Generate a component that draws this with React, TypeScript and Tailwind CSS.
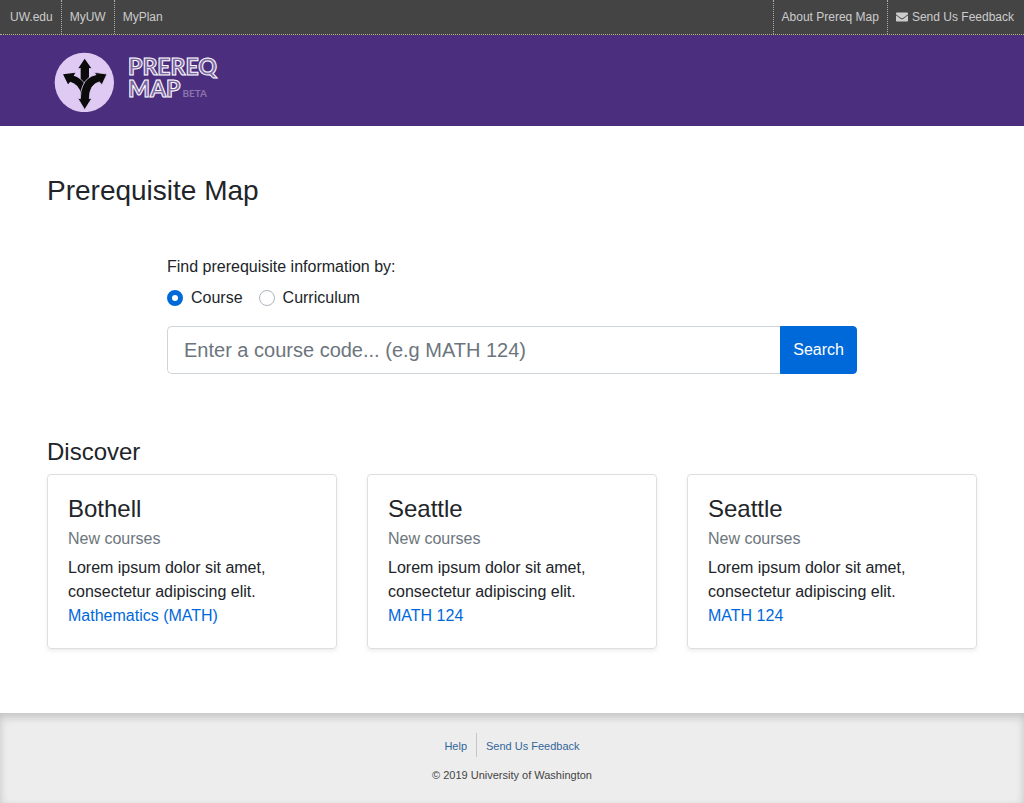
import { useState } from "react";
import { FaEnvelope } from "react-icons/fa";

const globalLinks = ["UW.edu", "MyUW", "MyPlan"];

const cards = [
  { campus: "Bothell", link: "Mathematics (MATH)" },
  { campus: "Seattle", link: "MATH 124" },
  { campus: "Seattle", link: "MATH 124" },
];

function ArrowsMark() {
  return (
    <svg viewBox="12 12 180 180" className="size-[60px]" aria-hidden="true">
      <circle cx="103" cy="103.5" r="89" fill="#dfcaf3" />
      <path
        d="M104 32 L124 61 L117 60 V90 Q108 98 104 106 Q99 98 92 92 V60 L85 61 Z"
        fill="#0b0b0b"
      />
      <path
        d="M39 79 L76 74 L71 83 Q92 89 105 109 Q98 122 94 138 Q86 108 61 101 L54 109 Z"
        fill="#0b0b0b"
      />
      <path
        d="M171 78 L132 73 L138 80 Q109 86 98 114 Q91 128 91 152 L83 150 L104 185 L126 150 L118 152 Q118 130 126 117 Q134 105 148 102 L156 110 Z"
        fill="#0b0b0b"
        stroke="#dfcaf3"
        strokeWidth="2.5"
      />
    </svg>
  );
}

function TopBar() {
  return (
    <nav
      aria-label="University"
      className="flex justify-between border-b border-dotted border-[#b5b58a] bg-[#444] px-[2px] text-xs leading-[34px] text-[#ccc]"
    >
      <ul className="flex">
        {globalLinks.map((label) => (
          <li
            key={label}
            className="border-r border-dotted border-[#aaa] px-2 last:border-r-0"
          >
            <a href="#">{label}</a>
          </li>
        ))}
      </ul>
      <ul className="flex">
        <li className="border-l border-dotted border-[#aaa] px-2">
          <a href="#">About Prereq Map</a>
        </li>
        <li className="border-l border-dotted border-[#aaa] px-2">
          <a href="#" className="flex items-center gap-1">
            <FaEnvelope className="size-3" aria-hidden="true" />
            Send Us Feedback
          </a>
        </li>
      </ul>
    </nav>
  );
}

function Header() {
  return (
    <header className="bg-[#4b2e7e] px-[54px] pt-[17px] pb-[14px]">
      <a href="#" className="flex w-fit gap-[14px]">
        <ArrowsMark />
        <span className="pt-[3px] font-['Lato',sans-serif] text-[23px] leading-[22px] font-black">
          <span className="block text-[#7d68a3] [-webkit-text-stroke:1px_#ffffff]">
            PREREQ
          </span>
          <span className="flex items-baseline gap-[2px]">
            <span className="text-[#7d68a3] [-webkit-text-stroke:1px_#ffffff]">
              MAP
            </span>
            <span className="text-[10px] font-bold text-[#8b74ad]">BETA</span>
          </span>
        </span>
      </a>
    </header>
  );
}

function SearchForm() {
  const [mode, setMode] = useState("course");
  const options = [
    { id: "course", label: "Course" },
    { id: "curriculum", label: "Curriculum" },
  ];
  return (
    <form
      className="mt-[47px] px-[120px]"
      onSubmit={(event) => event.preventDefault()}
    >
      <fieldset>
        <legend className="mb-[7px]">Find prerequisite information by:</legend>
        <div className="flex gap-4">
          {options.map(({ id, label }) => (
            <label key={id} htmlFor={id} className="flex items-center gap-2">
              <input
                id={id}
                type="radio"
                name="mode"
                checked={mode === id}
                onChange={() => setMode(id)}
                className="size-4 appearance-none rounded-full border border-[#adb5bd] bg-white checked:border-[5px] checked:border-[#0069d9]"
              />
              {label}
            </label>
          ))}
        </div>
      </fieldset>
      <div className="mt-4 flex h-12">
        <input
          type="text"
          aria-label="Course code"
          placeholder="Enter a course code... (e.g MATH 124)"
          className="min-w-0 flex-1 rounded-l-[5px] border border-r-0 border-[#ced4da] px-4 text-xl placeholder:text-[#6c757d]"
        />
        <button
          type="submit"
          className="rounded-r-[4px] border border-[#0069d9] bg-[#0069d9] px-3 text-white"
        >
          Search
        </button>
      </div>
    </form>
  );
}

function Discover() {
  return (
    <section className="mt-[63px]">
      <h2 className="text-2xl leading-[29px]">Discover</h2>
      <div className="mt-2 grid grid-cols-3 gap-[30px]">
        {cards.map(({ campus, link }, index) => (
          <article
            key={index}
            className="rounded-[4px] border border-[#dfdfdf] p-5 shadow-[0_2px_4px_rgba(0,0,0,0.075)]"
          >
            <h3 className="text-2xl leading-[27px]">{campus}</h3>
            <h4 className="mt-[7px] mb-2 leading-[19px] text-[#6c757d]">
              New courses
            </h4>
            <p>Lorem ipsum dolor sit amet, consectetur adipiscing elit.</p>
            <a href="#" className="block text-[#0069d9]">
              {link}
            </a>
          </article>
        ))}
      </div>
    </section>
  );
}

function Footer() {
  return (
    <footer className="mt-16 bg-[#ededed] pt-5 pb-[15px] text-center text-[11px] leading-[26px] text-[#444] shadow-[inset_0_4px_8px_rgba(0,0,0,0.18)]">
      <ul className="flex h-6 justify-center text-[#336699]">
        <li className="border-r border-[#c4c4c4] pr-[9px]">
          <a href="#">Help</a>
        </li>
        <li className="pl-[9px]">
          <a href="#">Send Us Feedback</a>
        </li>
      </ul>
      <p className="mt-[5px]">© 2019 University of Washington</p>
    </footer>
  );
}

export default function App() {
  return (
    <div className="bg-white font-['Liberation_Sans',Arial,sans-serif] text-base text-[#212529]">
      <TopBar />
      <Header />
      <main className="px-[47px] pt-12">
        <h1 className="text-[28px] leading-[34px]">Prerequisite Map</h1>
        <SearchForm />
        <Discover />
      </main>
      <Footer />
    </div>
  );
}
